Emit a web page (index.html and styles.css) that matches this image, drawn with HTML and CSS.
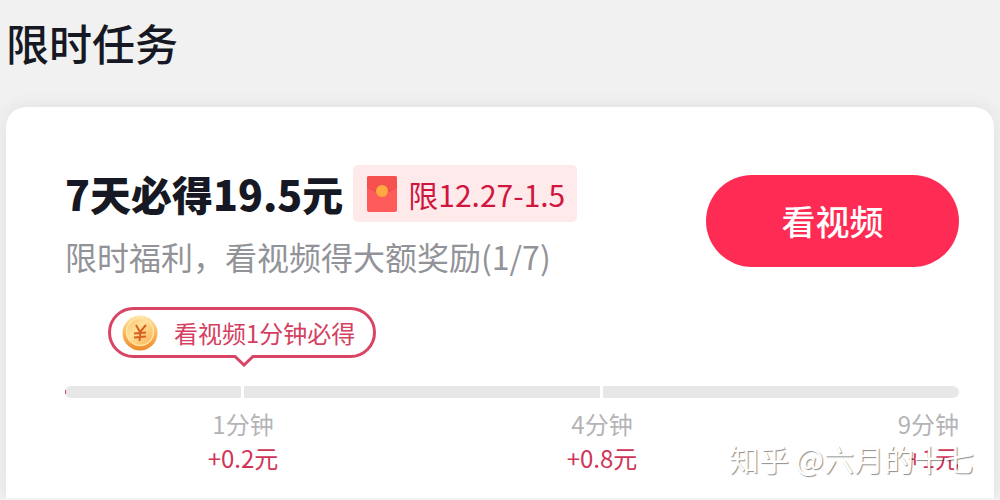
FILE: index.html
```html
<!DOCTYPE html>
<html lang="zh-CN">
<head>
<meta charset="utf-8">
<meta name="viewport" content="width=device-width, initial-scale=1">
<title>限时任务</title>
<link rel="stylesheet" href="styles.css">
</head>
<body>

    <h1 class="page-title">限时任务</h1>

    <div class="card">
        <div class="task">
            <div class="task-info">
                <div class="task-head">
                    <h2 class="task-title">7天必得19.5元</h2>
                    <span class="tag">
                        <svg class="tag-icon" width="30" height="36" viewBox="0 0 30 36">
                            <rect width="30" height="36" rx="2" fill="#fd5c5a"/>
                            <path d="M0 2a2 2 0 0 1 2-2h26a2 2 0 0 1 2 2v9q-15 11-30 0z" fill="#f5524f"/>
                            <path d="M0 11q15 11 30 0" fill="none" stroke="#ea4a4c"/>
                            <circle cx="15" cy="15" r="6" fill="#ffa940"/>
                        </svg>
                        限12.27-1.5
                    </span>
                </div>
                <p class="task-desc">限时福利，看视频得大额奖励(1/7)</p>
            </div>
            <button class="watch-btn" type="button">看视频</button>
        </div>

        <div class="bubble">
            <svg class="coin" width="36" height="36" viewBox="0 0 36 36">
                <defs>
                    <linearGradient id="rim" x1="0" y1="0" x2="0" y2="1">
                        <stop offset="0" stop-color="#ffe9b0"/>
                        <stop offset="0.5" stop-color="#f9b85a"/>
                        <stop offset="1" stop-color="#ee8a2c"/>
                    </linearGradient>
                    <linearGradient id="face" x1="0" y1="0" x2="1" y2="1">
                        <stop offset="0" stop-color="#fcc268"/>
                        <stop offset="0.400" stop-color="#ffe09a"/>
                        <stop offset="1" stop-color="#fcb050"/>
                    </linearGradient>
                </defs>
                <circle cx="18" cy="18" r="17.500" fill="url(#rim)"/>
                <circle cx="18" cy="17" r="13.500" fill="url(#face)" stroke="#ffe3a0" stroke-width="1.500"/>
                <path d="M14 10l4 7 6-7M18.500 17l-1 9M12 18.500l12-1M12 22.500l12-1" fill="none" stroke="#d8601f" stroke-width="2"/>
            </svg>
            看视频1分钟必得
            <svg class="bubble-arrow" width="20" height="12" viewBox="0 0 20 12">
                <path d="M0 0h20L10 10z" fill="#fff"/>
                <path d="M0 0.500l10 9.500 10-9.500" fill="none" stroke="#d94464" stroke-width="3"/>
            </svg>
        </div>

        <div class="track">
            <div class="segment segment-first"></div>
            <div class="segment"></div>
            <div class="segment segment-last"></div>
        </div>

        <div class="steps">
            <div class="step">
                <div class="step-time">1分钟</div>
                <div class="step-money">+0.2元</div>
            </div>
            <div class="step">
                <div class="step-time">4分钟</div>
                <div class="step-money">+0.8元</div>
            </div>
            <div class="step step-last">
                <div class="step-time">9分钟</div>
                <div class="step-money">+1元</div>
            </div>
        </div>
    </div>

    <div class="watermark">知乎 @六月的十七</div>

</body>
</html>
```

FILE: styles.css
```css
* {
  box-sizing: border-box;
}

body {
  margin: 0;
  padding: 0 6px;
  position: relative;
  background-color: #f1f1f1;
  color: #161823;
  font-family: "Noto Sans CJK SC", sans-serif;
}

.page-title {
  margin: 0;
  padding: 10px 0 33px;
  font-size: 43px;
  font-weight: 500;
  line-height: 64px;
}

.card {
  padding: 58px 35px 22px 59px;
  border-radius: 20px 20px 0 0;
  background-color: #fff;
  box-shadow: 0 0 20px rgba(0, 0, 0, 0.08);
}

.task {
  display: flex;
  justify-content: space-between;
  align-items: center;
}

.task-head {
  display: flex;
  align-items: center;
  gap: 10px;
}

.task-title {
  margin: 0;
  font-size: 41px;
  font-weight: 900;
  line-height: 57px;
}

.tag {
  display: flex;
  align-items: center;
  gap: 11px;
  height: 57px;
  padding: 0 12px 0 14px;
  border-radius: 5px;
  background-color: #ffeaeb;
  color: #d0163f;
  font-size: 30px;
}

.task-desc {
  margin: 14px 0 0;
  color: #929398;
  font-size: 32px;
  font-weight: 400;
  line-height: 40px;
}

.watch-btn {
  width: 253px;
  height: 92px;
  border: 0;
  border-radius: 46px;
  background-color: #fe2c55;
  color: #fff;
  font-family: inherit;
  font-size: 34px;
  font-weight: 500;
}

.bubble {
  display: flex;
  align-items: center;
  gap: 16px;
  position: relative;
  width: fit-content;
  height: 51px;
  margin: 31px 0 28px 43px;
  padding: 0 18px 0 11px;
  border: 3px solid #d94464;
  border-radius: 26px;
  color: #d4405f;
  font-size: 24px;
}

.bubble-arrow {
  position: absolute;
  top: 100%;
  left: calc(50% - 8px);
}

.track {
  display: grid;
  grid-template-columns: 176fr 356fr 356fr;
  gap: 3px;
  position: relative;
}

/* sliver of progress at the very start of the bar */
.track::before {
  content: "";
  position: absolute;
  top: 4px;
  left: 0;
  width: 1px;
  height: 4px;
  background-color: #d94464;
}

.segment {
  height: 12px;
  background-color: #e7e7e7;
}

.segment-first {
  border-radius: 6px 0 0 6px;
}

.segment-last {
  border-radius: 0 6px 6px 0;
}

.steps {
  display: grid;
  grid-template-columns: 176fr 356fr 356fr;
  gap: 3px;
  margin-top: 9px;
  padding-bottom: 1px;
  font-size: 24px;
  line-height: 34px;
}

/* centred on the gap after its segment */
.step {
  justify-self: end;
  width: 80px;
  margin-right: -42px;
  text-align: center;
}

.step-last {
  margin-right: 0;
  text-align: right;
}

.step-time {
  color: #b4b4b7;
}

.step-money {
  color: #cf3558;
}

.watermark {
  position: absolute;
  right: 26px;
  bottom: 20px;
  color: #fff;
  font-size: 30px;
  line-height: 40px;
  text-shadow: 1px 1px 1px rgba(0, 0, 0, 0.45);
}
```
